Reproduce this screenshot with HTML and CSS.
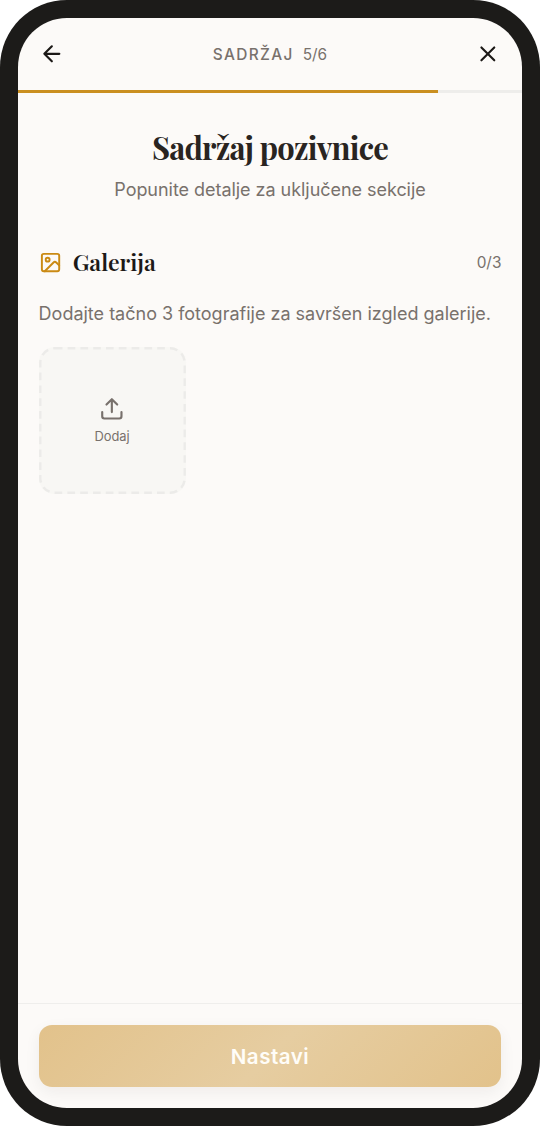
FILE: index.html
```html
<!DOCTYPE html>
<html lang="sr-Latn">
<head>
<meta charset="utf-8">
<title>Sadržaj pozivnice</title>
<link rel="stylesheet" href="styles.css">
</head>
<body>
<div class="phone">
  <div class="screen">
    <header class="topbar">
      <svg class="icon" viewBox="0 0 24 24"><path d="m12 19-7-7 7-7M19 12H5"/></svg>
      <div class="step"><span class="step-name">SADRŽAJ</span><span class="step-count">5/6</span></div>
      <svg class="icon" viewBox="0 0 24 24"><path d="M18 6 6 18M6 6l12 12"/></svg>
    </header>
    <div class="progress"><div class="progress-fill"></div></div>
    <main class="content">
      <h1 class="title">Sadržaj pozivnice</h1>
      <p class="subtitle">Popunite detalje za uključene sekcije</p>
      <section class="gallery">
        <div class="gallery-head">
          <svg class="icon gallery-icon" viewBox="0 0 24 24"><rect x="3" y="3" width="18" height="18" rx="2"/><circle cx="9" cy="9" r="2"/><path d="m21 15-3.086-3.086a2 2 0 0 0-2.828 0L6 21"/></svg>
          <h2 class="gallery-title">Galerija</h2>
          <span class="gallery-count">0/3</span>
        </div>
        <p class="hint">Dodajte tačno 3 fotografije za savršen izgled galerije.</p>
        <div class="upload">
          <svg class="dashes" viewBox="0 0 147 147"><rect x="1.3" y="1.3" width="144.4" height="144.4" rx="14.5"/></svg>
          <svg class="icon upload-icon" viewBox="0 0 24 24"><path d="M12 3v12M17 8l-5-5-5 5M21 15v4a2 2 0 0 1-2 2H5a2 2 0 0 1-2-2v-4"/></svg>
          <span class="upload-label">Dodaj</span>
        </div>
      </section>
    </main>
    <footer class="footer"><div class="button">Nastavi</div></footer>
  </div>
</div>
</body>
</html>
```
FILE: styles.css
```css
* { box-sizing: border-box; }
body { margin: 0; background: #fff; font-family: Inter, "Liberation Sans", sans-serif; color: #78716c; }
h1, h2, p { margin: 0; }
.phone { width: 540px; height: 1126px; padding: 18px; border-radius: 67px; background: #1c1b19; }
.screen { height: 1090px; border-radius: 49px; overflow: hidden; background: #fcfaf8; display: flex; flex-direction: column; }
.topbar { height: 72px; padding: 0 21px 0 20.6px; display: flex; align-items: center; justify-content: space-between; }
.icon { width: 25.7px; height: 25.7px; flex: none; fill: none; stroke: #1c1917; stroke-width: 2; stroke-linecap: round; stroke-linejoin: round; }
.step { display: flex; gap: 9px; font-size: 15.4px; }
.step-name { letter-spacing: 1.35px; font-weight: 500; }
.step-count { letter-spacing: -0.1px; }
.progress { height: 3px; background: #eeedeb; }
.progress-fill { width: 420px; height: 3px; background: #ca8f20; }
.content { flex: 1; padding: 34px 20.6px 0; }
.title { height: 42px; text-align: center; font: 700 30.86px/41px "Playfair Display", "Liberation Serif", serif; letter-spacing: -0.77px; color: #292421; white-space: nowrap; }
.subtitle { margin-top: 8.4px; text-align: center; font-size: 18px; line-height: 26px; letter-spacing: -0.04px; }
.gallery { margin-top: 42px; }
.gallery-head { height: 34px; display: flex; align-items: center; }
.gallery-icon { width: 23.1px; height: 23.1px; stroke: #ca8a14; }
.gallery-title { margin-left: 11px; font: 600 23.14px/34px "Playfair Display", "Liberation Serif", serif; color: #1c1917; }
.gallery-count { margin-left: auto; font-size: 15.4px; }
.hint { margin-top: 21px; font-size: 18px; line-height: 28px; white-space: nowrap; }
.upload { position: relative; width: 147px; height: 147px; margin-top: 19px; border-radius: 15.5px; background: #f8f7f4; display: flex; flex-direction: column; align-items: center; justify-content: center; gap: 6px; }
.dashes { position: absolute; inset: 0; fill: none; stroke: #ecebe9; stroke-width: 2.4; stroke-dasharray: 7.7 5.1; }
.upload-icon { stroke: #78716c; }
.upload-label { font-size: 12.9px; line-height: 19px; }
.footer { height: 105px; padding: 21px 20.6px; border-top: 1.3px solid #efeeec; }
.button { height: 62px; border-radius: 13px; display: flex; align-items: center; justify-content: center; background: linear-gradient(135deg, #e2c28b 0%, #e6cda1 50%, #e2c28b 100%); box-shadow: 0 5px 16px rgba(28, 25, 23, 0.06); color: #fffdf8; font-size: 20.57px; font-weight: 600; letter-spacing: 0.5px; }
```
